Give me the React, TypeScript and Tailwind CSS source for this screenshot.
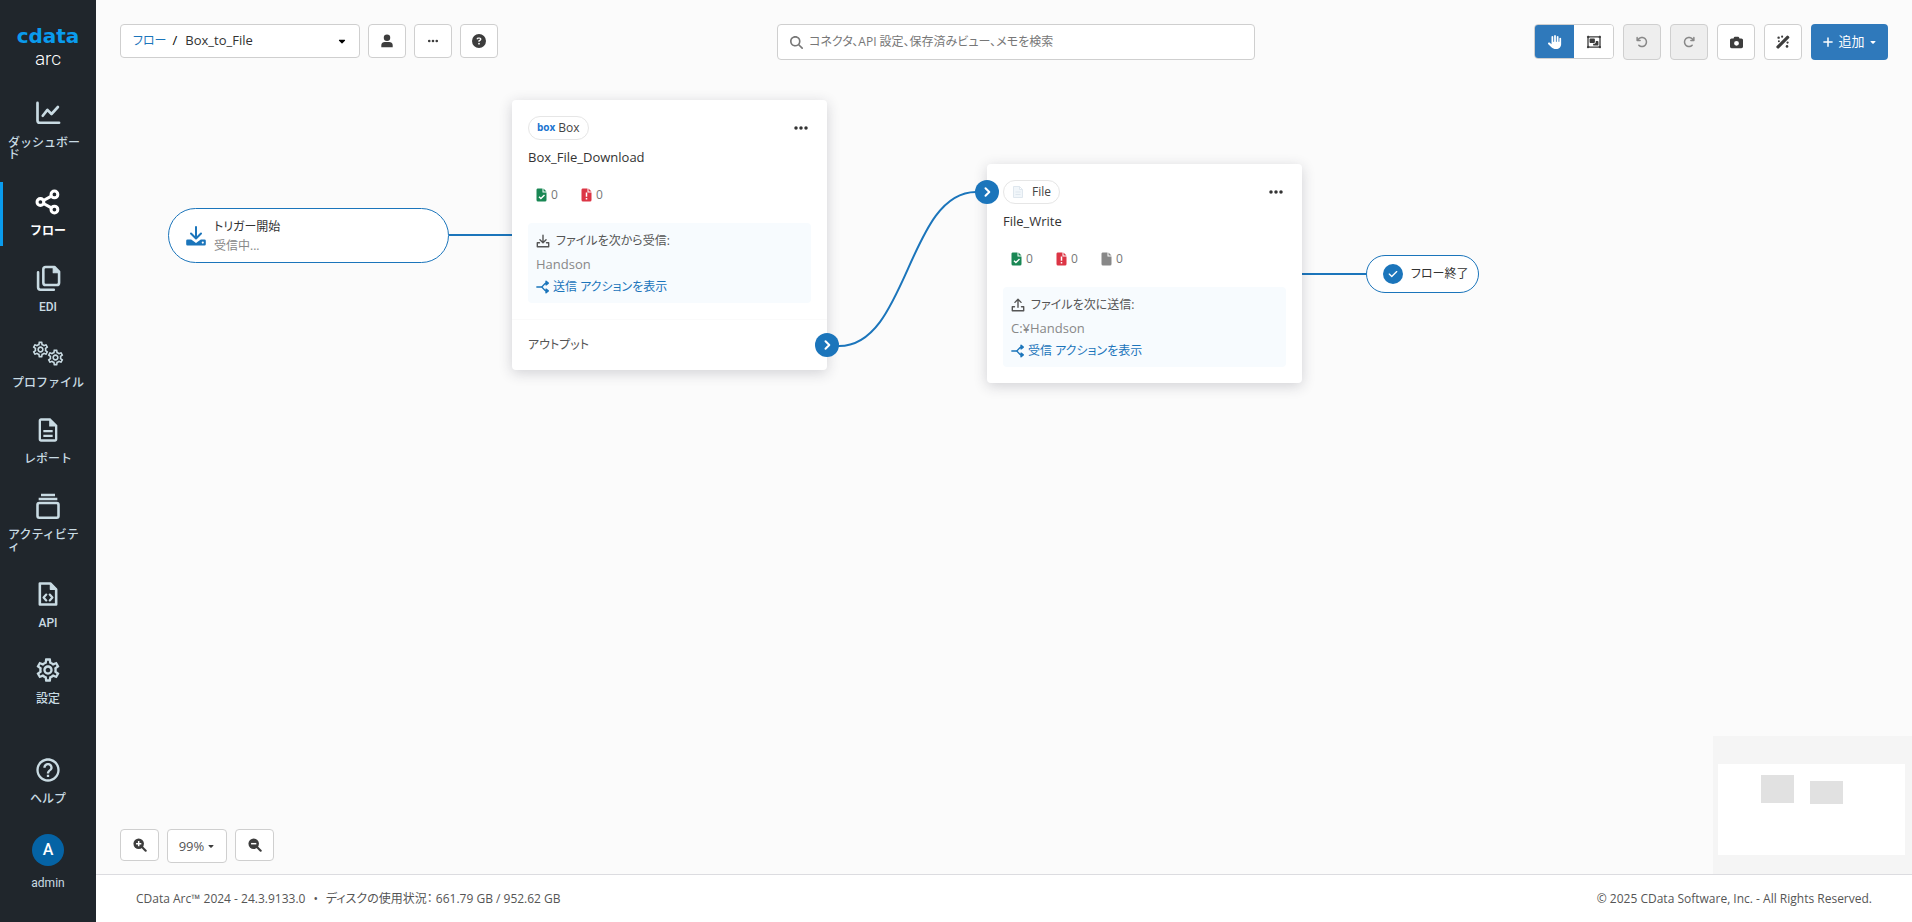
import type { ReactNode } from 'react';
import {
  FaArrowRotateLeft,
  FaArrowRotateRight,
  FaCamera,
  FaCaretDown,
  FaCheck,
  FaCircleQuestion,
  FaEllipsis,
  FaHand,
  FaMagnifyingGlass,
  FaPlus,
  FaRegObjectGroup,
} from 'react-icons/fa6';
import { MdHelpOutline, MdOutlineDescription, MdOutlineSettings } from 'react-icons/md';

const stroke = {
  fill: 'none',
  stroke: 'currentColor',
  strokeWidth: 2,
  strokeLinecap: 'round',
  strokeLinejoin: 'round',
} as const;

const ChartIcon = () => (
  <svg viewBox="0 0 24 24" className="size-7" {...stroke} strokeWidth={2.3}>
    <path d="M3 2.500v15a2 2 0 0 0 2 2h16.500" />
    <path d="M7.500 13.500l4-5 3.500 3.500L20.500 6" />
  </svg>
);

const FlowIcon = () => (
  <svg viewBox="0 0 24 24" className="size-7" {...stroke} strokeWidth={2.6}>
    <circle cx="5.500" cy="12" r="2.900" />
    <circle cx="17.500" cy="5.500" r="2.900" />
    <circle cx="17.500" cy="18.500" r="2.900" />
    <path d="M8.500 10.500l6-3.300M8.500 13.500l6 3.300" />
  </svg>
);

const CopyIcon = () => (
  <svg viewBox="0 0 24 24" className="size-7" {...stroke} strokeWidth={2.2}>
    <path d="M10 2.500h7.500l4 4V16a2 2 0 0 1-2 2H10a2 2 0 0 1-2-2V4.500a2 2 0 0 1 2-2z" />
    <path d="M16.500 2.500v5h5z" fill="currentColor" strokeWidth={1} />
    <path d="M3.500 7v13a2 2 0 0 0 2 2H17" />
  </svg>
);

const GearsIcon = () => (
  <span className="flex h-7 items-start justify-center">
    <MdOutlineSettings className="size-[19px]" />
    <MdOutlineSettings className="-ml-1 mt-2 size-[19px]" />
  </span>
);

const StackIcon = () => (
  <svg viewBox="0 0 24 24" className="size-7" {...stroke} strokeWidth={2.2}>
    <rect x="3" y="9.500" width="18" height="12.500" rx="1.500" />
    <path d="M4 6h16M6 2.500h12" strokeLinecap="butt" />
  </svg>
);

const ApiIcon = () => (
  <svg viewBox="0 0 24 24" className="size-7" {...stroke} strokeWidth={2.2}>
    <path d="M5 3h9l5 5v13H5z" />
    <path d="M14 3v5h5z" fill="currentColor" strokeWidth={1} />
    <path d="M10.500 12.500l-2.300 2.500 2.300 2.500M13.500 12.500l2.300 2.500-2.300 2.500" strokeWidth={1.9} />
  </svg>
);

const PersonIcon = () => (
  <svg viewBox="0 0 16 16" className="size-[14px]" fill="currentColor">
    <circle cx="8" cy="4.300" r="3.700" />
    <path d="M1.500 15v-2.500C1.500 10.300 3.500 9 5.500 9h5c2 0 4 1.300 4 3.500V15z" />
  </svg>
);

const WandIcon = () => (
  <svg viewBox="0 0 16 16" className="size-[14px]" fill="currentColor">
    <path d="M.8 12.600L12.200 1.200a1.400 1.400 0 0 1 2 0l.6.600a1.400 1.400 0 0 1 0 2L3.400 15.200a1.400 1.400 0 0 1-2 0l-.6-.6a1.400 1.400 0 0 1 0-2z" />
    <circle cx="3" cy="3" r="1.400" />
    <circle cx="7" cy="1.900" r="1.200" />
    <circle cx="13.200" cy="8.600" r="1.300" />
    <circle cx="12.600" cy="13" r="1.500" />
    <circle cx="3.300" cy="7.200" r="1.100" />
  </svg>
);

const ZoomIcon = ({ plus = false }: { plus?: boolean }) => (
  <svg viewBox="0 0 16 16" className="size-[14px]">
    <path d="M10 10l4.500 4.500" stroke="currentColor" strokeWidth="2.400" strokeLinecap="round" />
    <circle cx="6.500" cy="6.500" r="6" fill="currentColor" />
    <path d={plus ? 'M3.500 6.500h6M6.500 3.500v6' : 'M3.500 6.500h6'} stroke="white" strokeWidth="1.700" />
  </svg>
);

const TrayIcon = ({ up = false }: { up?: boolean }) => (
  <svg viewBox="0 0 16 16" className="size-[14px] shrink-0" {...stroke} strokeWidth={1.6}>
    <path d={up ? 'M8 10.500V2M4.500 5L8 1.500 11.500 5' : 'M8 1.500V9.500M4.500 6.500L8 10l3.500-3.500'} />
    <path d="M4 10H1.500v4.500h13V10H12" />
  </svg>
);

const BranchIcon = () => (
  <svg viewBox="0 0 16 16" className="size-[14px] shrink-0" {...stroke} strokeWidth={1.7}>
    <path d="M1 8h5c2 0 3-4.500 6-4.500M6 8c2 0 3 4.500 6 4.500" />
    <path d="M11.500 1.500l2.500 2-2.500 2zM11.500 10.500l2.500 2-2.500 2z" fill="currentColor" />
  </svg>
);

const TriggerIcon = () => (
  <svg viewBox="0 0 20 20" className="size-5 shrink-0">
    <path d="M10 1v11M5 7.500l5 5 5-5" {...stroke} />
    <path
      d="M1.500 13.500h3.700L10 17l4.800-3.500h3.700a1.300 1.300 0 0 1 1.300 1.300v3.400a1.300 1.300 0 0 1-1.300 1.300h-17a1.300 1.300 0 0 1-1.300-1.300v-3.400a1.300 1.300 0 0 1 1.300-1.300z"
      fill="currentColor"
    />
    <circle cx="16.800" cy="16.600" r="1.100" fill="white" />
  </svg>
);

const ChevronIcon = () => (
  <svg viewBox="0 0 12 12" className="size-3" {...stroke}>
    <path d="M4.500 2.200L8.300 6 4.500 9.800" />
  </svg>
);

type StatKind = 'ok' | 'error' | 'pending';

const statStyle: Record<StatKind, { color: string; label: string; mark: ReactNode }> = {
  ok: {
    color: 'text-[#198754]',
    label: '成功',
    mark: <path d="M3 8.700l1.900 1.900L8.500 7" fill="none" stroke="white" strokeWidth="1.400" />,
  },
  error: {
    color: 'text-[#dc3545]',
    label: 'エラー',
    mark: <path d="M5.500 4.500v4.300M5.500 10v1.600" fill="none" stroke="white" strokeWidth="1.500" />,
  },
  pending: { color: 'text-[#888888]', label: '保留', mark: null },
};

const Stat = ({ kind }: { kind: StatKind }) => (
  <li className="flex w-[45px] items-center gap-1" title={statStyle[kind].label}>
    <svg viewBox="0 0 11 14" className={`h-[14px] w-[11px] ${statStyle[kind].color}`} fill="currentColor">
      <path d="M1.500.500H6.500V4.500H10.500V12A1.500 1.500 0 0 1 9 13.500H2A1.500 1.500 0 0 1 .5 12V2A1.500 1.500 0 0 1 1.500.500z" />
      <path d="M7.500.500l3 3h-3z" />
      {statStyle[kind].mark}
    </svg>
    <span className="text-xs text-[#777777]">0</span>
  </li>
);

const navItems: { label: string; icon: ReactNode; active?: boolean }[] = [
  { label: 'ダッシュボード', icon: <ChartIcon /> },
  { label: 'フロー', icon: <FlowIcon />, active: true },
  { label: 'EDI', icon: <CopyIcon /> },
  { label: 'プロファイル', icon: <GearsIcon /> },
  { label: 'レポート', icon: <MdOutlineDescription className="size-7" /> },
  { label: 'アクティビティ', icon: <StackIcon /> },
  { label: 'API', icon: <ApiIcon /> },
  { label: '設定', icon: <MdOutlineSettings className="size-7" /> },
];

const NavLink = ({ label, icon, active }: { label: string; icon: ReactNode; active?: boolean }) => (
  <a
    href="#"
    aria-current={active ? 'page' : undefined}
    className={`flex flex-col items-center gap-[9px] border-l-[3px] pb-[9px] pl-[5px] pr-2 pt-[6px] text-xs leading-3 ${
      active ? 'border-[#0a9bed] font-bold text-white' : 'border-transparent font-medium text-[#c9dbe3]'
    }`}
  >
    {icon}
    <span className="break-all">{label}</span>
  </a>
);

const Sidebar = () => (
  <nav className="flex w-24 shrink-0 flex-col gap-3 bg-[#20262c] pb-[33px] pt-6 font-['Roboto','Noto_Sans_CJK_JP',sans-serif]">
    <div className="flex h-[58px] flex-col items-center">
      <span className="font-['DejaVu_Sans',sans-serif] text-[20px] font-bold leading-6 text-[#0a9bed]">cdata</span>
      <span className="text-[19px] font-light leading-[22px] text-white">arc</span>
    </div>
    {navItems.map((item) => (
      <NavLink key={item.label} {...item} />
    ))}
    <div className="mt-auto">
      <NavLink label="ヘルプ" icon={<MdHelpOutline className="size-7" />} />
    </div>
    <button type="button" className="flex flex-col items-center gap-[11px] pt-2 text-xs leading-3 text-[#c9dbe3]">
      <span className="flex size-8 items-center justify-center rounded-full bg-[#0563a5] text-base font-medium text-white">
        A
      </span>
      admin
    </button>
  </nav>
);

const ToolButton = ({ label, children, className = '' }: { label: string; children: ReactNode; className?: string }) => (
  <button
    type="button"
    aria-label={label}
    className={`flex shrink-0 items-center justify-center rounded border border-[#cfcfcf] text-sm text-[#3d3d3d] ${className}`}
  >
    {children}
  </button>
);

const Toolbar = () => (
  <header className="flex items-start justify-between">
    <div className="flex gap-2">
      <div className="flex h-[34px] w-60 items-center rounded border border-[#cfcfcf] bg-white pl-3 pr-2 text-[13px]">
        <a href="#" className="text-xs text-[#1b75bb]">
          フロー
        </a>
        <span className="pl-[6px]">/</span>
        <select
          aria-label="フローを選択"
          className="ml-2 flex-1 appearance-none bg-transparent text-[#333333] outline-none"
          defaultValue="Box_to_File"
        >
          <option>Box_to_File</option>
        </select>
        <FaCaretDown className="mr-1 size-[10px]" />
      </div>
      <ToolButton label="ユーザー" className="h-[34px] w-[38px] bg-white">
        <PersonIcon />
      </ToolButton>
      <ToolButton label="その他" className="h-[34px] w-[38px] bg-white">
        <FaEllipsis className="size-3" />
      </ToolButton>
      <ToolButton label="ヘルプ" className="h-[34px] w-[38px] bg-white">
        <FaCircleQuestion />
      </ToolButton>
    </div>

    <label className="flex h-9 max-w-[478px] flex-1 items-center gap-[6px] rounded border border-[#cfcfcf] bg-white px-3">
      <FaMagnifyingGlass className="size-[13px] text-[#777777]" />
      <input
        type="search"
        aria-label="検索"
        placeholder="コネクタ、API 設定、保存済みビュー、メモを検索"
        className="min-w-0 flex-1 bg-transparent text-xs outline-none placeholder:text-[#777777]"
      />
    </label>

    <div className="flex gap-[9px]">
      <div className="flex h-[35px] w-20 overflow-hidden rounded border border-[#cfcfcf] text-sm">
        <button type="button" aria-label="移動" className="flex flex-1 items-center justify-center bg-[#2f79bb] text-white">
          <FaHand />
        </button>
        <button type="button" aria-label="範囲選択" className="flex flex-1 items-center justify-center bg-white text-[#3d3d3d]">
          <FaRegObjectGroup className="size-4" />
        </button>
      </div>
      <ToolButton label="元に戻す" className="h-9 w-[38px] bg-[#eeeeee]">
        <FaArrowRotateLeft className="size-3 text-[#888888]" />
      </ToolButton>
      <ToolButton label="やり直し" className="h-9 w-[38px] bg-[#eeeeee]">
        <FaArrowRotateRight className="size-3 text-[#888888]" />
      </ToolButton>
      <ToolButton label="スナップショット" className="h-9 w-[38px] bg-white">
        <FaCamera className="size-[13px]" />
      </ToolButton>
      <ToolButton label="自動整列" className="h-9 w-[38px] bg-white">
        <WandIcon />
      </ToolButton>
      <button
        type="button"
        className="flex h-9 w-[77px] items-center justify-center gap-1 rounded bg-[#2f79bb] text-[13px] text-white"
      >
        <FaPlus className="size-3" />
        追加
        <FaCaretDown className="size-2" />
      </button>
    </div>
  </header>
);

const Port = ({ className }: { className: string }) => (
  <span className={`absolute flex size-6 items-center justify-center rounded-full bg-[#1b75bb] text-white ${className}`}>
    <ChevronIcon />
  </span>
);

type CardProps = {
  badge: ReactNode;
  name: string;
  stats: StatKind[];
  up?: boolean;
  action: string;
  target: string;
  link: string;
  className: string;
  children?: ReactNode;
};

const ConnectorCard = ({ badge, name, stats, up, action, target, link, className, children }: CardProps) => (
  <article className={`absolute w-[315px] rounded bg-white shadow-[0_3px_14px_rgba(40,40,60,0.2)] ${className}`}>
    <div className="p-4">
      <div className="flex items-center justify-between">
        <span className="flex h-6 items-center rounded-full border border-[#e6e6e6] px-2 text-xs text-[#444444]">
          {badge}
        </span>
        <button type="button" aria-label="メニュー" className="mr-[2px] text-[#333333]">
          <FaEllipsis className="size-4" />
        </button>
      </div>
      <h2 className="mt-[7px] text-[13px] leading-5 text-[#333333]">{name}</h2>
      <ul className="mt-[18px] flex h-5 items-center pl-2">
        {stats.map((kind) => (
          <Stat key={kind} kind={kind} />
        ))}
      </ul>
      <div className="mt-[18px] flex flex-col gap-[3px] rounded-sm bg-[#f7fbfe] px-2 pb-[6px] pt-2 text-xs leading-5">
        <p className="flex items-center gap-[6px] text-[#555555]">
          <TrayIcon up={up} />
          {action}
        </p>
        <p className="text-[13px] text-[#888888]">{target}</p>
        <a href="#" className="flex items-center gap-[3px] text-[#1b75bb]">
          <BranchIcon />
          {link}
        </a>
      </div>
    </div>
    {children}
  </article>
);

const FlowCanvas = () => (
  <div className="absolute inset-0">
    <svg className="absolute inset-0 size-full" fill="none" stroke="#1b75bb" strokeWidth="2">
      <path d="M353 235h64" />
      <path d="M731 346h12C812 346 812 192 880 192h12" />
      <path d="M1206 274h64" />
    </svg>

    <div className="absolute left-[72px] top-[208px] flex h-[55px] w-[281px] items-center gap-2 rounded-full border border-[#1b75bb] bg-white pl-[17px]">
      <span className="text-[#1b75bb]">
        <TriggerIcon />
      </span>
      <div className="text-xs leading-[19px]">
        <p className="text-[#333333]">トリガー開始</p>
        <p className="text-[#888888]">受信中...</p>
      </div>
    </div>

    <ConnectorCard
      className="left-[416px] top-[100px]"
      badge={
        <>
          <b className="mr-[3px] text-[10px] text-[#1b75d0]">box</b>Box
        </>
      }
      name="Box_File_Download"
      stats={['ok', 'error']}
      action="ファイルを次から受信:"
      target="Handson"
      link="送信 アクションを表示"
    >
      <div className="border-t border-[#fafafa] px-4 py-[15px] text-xs leading-5 text-[#555555]">アウトプット</div>
      <Port className="-right-3 bottom-[13px]" />
    </ConnectorCard>

    <ConnectorCard
      className="left-[891px] top-[164px]"
      badge={
        <>
          <svg viewBox="0 0 12 14" className="mr-2 h-[14px] w-3" fill="#f1f6fa" stroke="#dfe7ee">
            <path d="M1.500 1.500h6l3 3v8h-9zM7.500 1.500v3h3M3.500 7h5M3.500 9.500h5" />
          </svg>
          File
        </>
      }
      name="File_Write"
      stats={['ok', 'error', 'pending']}
      up
      action="ファイルを次に送信:"
      target="C:¥Handson"
      link="受信 アクションを表示"
    >
      <Port className="-left-3 top-4" />
    </ConnectorCard>

    <div className="absolute left-[1270px] top-[255px] flex h-[38px] w-[113px] items-center gap-2 rounded-full border border-[#1b75bb] bg-white pl-4 text-xs text-[#333333]">
      <span className="flex size-5 items-center justify-center rounded-full bg-[#1b75bb] text-white">
        <FaCheck className="size-[10px]" />
      </span>
      フロー終了
    </div>
  </div>
);

const Minimap = () => (
  <div className="absolute bottom-0 right-0 h-[138px] w-[199px] bg-[#f5f5f5]">
    <div className="absolute left-[5px] top-7 h-[91px] w-[187px] bg-white">
      <span className="absolute left-[43px] top-[11px] h-7 w-[33px] bg-[#e1e1e1]" />
      <span className="absolute left-[92px] top-[17px] h-[23px] w-[33px] bg-[#e1e1e1]" />
    </div>
  </div>
);

const ZoomControls = () => (
  <div className="flex items-start gap-2">
    <ToolButton label="拡大" className="h-8 w-[39px] bg-white">
      <ZoomIcon plus />
    </ToolButton>
    <ToolButton label="表示倍率" className="h-[34px] w-[60px] gap-[3px] bg-white">
      <span className="text-[13px] text-[#555555]">99%</span>
      <FaCaretDown className="size-2" />
    </ToolButton>
    <ToolButton label="縮小" className="h-8 w-[39px] bg-white">
      <ZoomIcon />
    </ToolButton>
  </div>
);

export default function App() {
  return (
    <div className="flex min-h-screen">
      <Sidebar />
      <div className="flex min-w-0 flex-1 flex-col font-['Open_Sans','Noto_Sans_CJK_JP',sans-serif] [font-feature-settings:'palt']">
        <main className="relative flex flex-1 flex-col overflow-hidden bg-[#fbfbfb]">
          <FlowCanvas />
          <Minimap />
          <div className="pointer-events-none relative flex flex-1 flex-col justify-between px-6 pb-[11px] pt-6 [&_a]:pointer-events-auto [&_button]:pointer-events-auto [&_label]:pointer-events-auto [&_select]:pointer-events-auto">
            <Toolbar />
            <ZoomControls />
          </div>
        </main>
        <footer className="flex h-12 items-center justify-between border-t border-[#dcdce0] bg-white px-10 text-xs text-[#555555]">
          <p className="flex gap-2">
            <span>CData Arc™ 2024 - 24.3.9133.0</span>
            <span>•</span>
            <span>ディスクの使用状況： 661.79 GB / 952.62 GB</span>
          </p>
          <p>© 2025 CData Software, Inc. - All Rights Reserved.</p>
        </footer>
      </div>
    </div>
  );
}
